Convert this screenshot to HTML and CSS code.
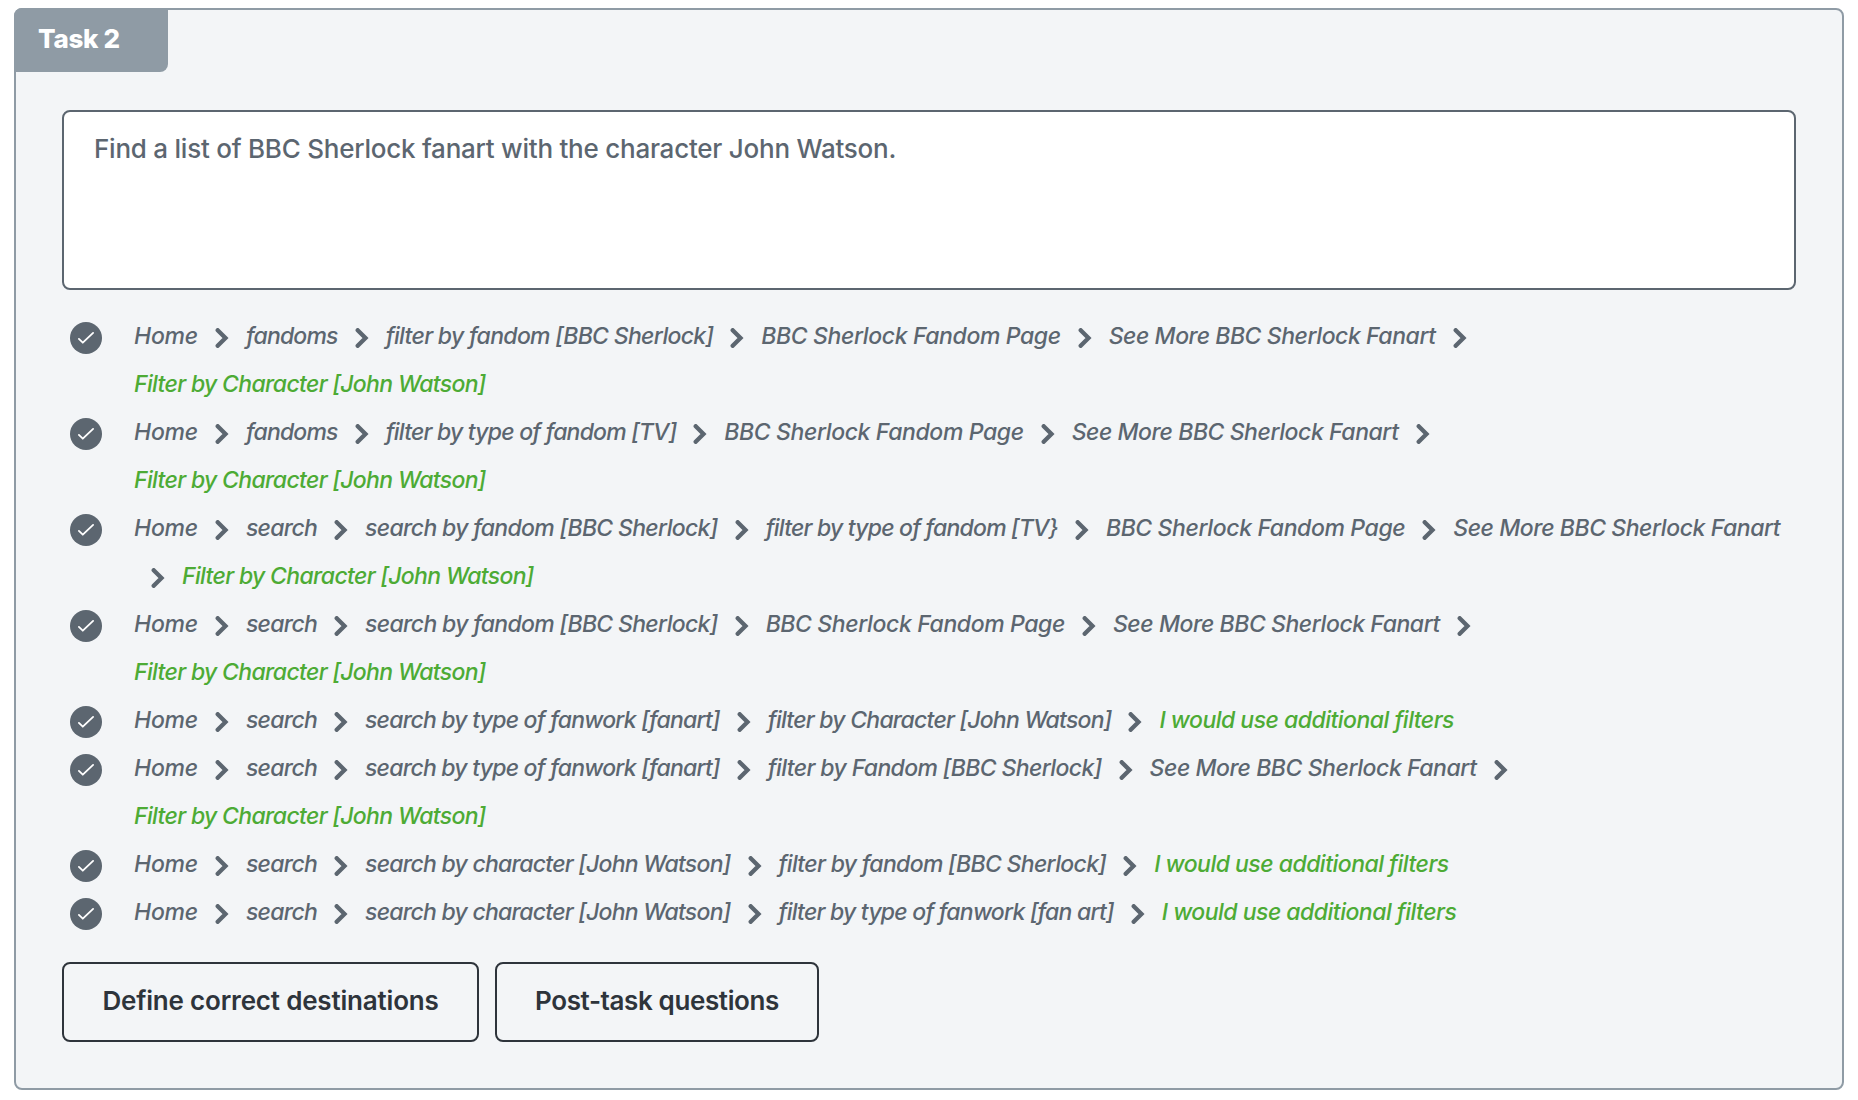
FILE: index.html
```
<!DOCTYPE html>
<html lang="en">
<head>
<meta charset="utf-8">
<title>Task 2</title>
<link rel="stylesheet" href="styles.css">
</head>
<body>
<svg class="defs" aria-hidden="true">
  <symbol id="check" viewBox="0 0 32 32"><circle cx="16" cy="16" r="16" fill="#5c6670"/><path d="M8.9 16.9l3.9 3.8L23.1 10.9" fill="none" stroke="#fff" stroke-width="1.8" stroke-linecap="round" stroke-linejoin="round"/></symbol>
  <symbol id="next" viewBox="0 0 14 20"><path d="M2.7 2.2L10.5 10L2.7 17.8" fill="none" stroke="#5c6670" stroke-width="4.3" stroke-linecap="round"/></symbol>
</svg>
<section class="task">
  <h2 class="task-label">Task 2</h2>
  <div class="description">Find a list of BBC Sherlock fanart with the character John Watson.</div>
  <ul class="paths">
    <li class="path"><svg class="check"><use href="#check"/></svg><div class="crumbs"><span class="home">Home</span><svg class="next"><use href="#next"/></svg><span class="fandoms">fandoms</span><svg class="next"><use href="#next"/></svg><span class="filter-fandom">filter by fandom [BBC Sherlock]</span><svg class="next"><use href="#next"/></svg><span class="fandom-page">BBC Sherlock Fandom Page</span><svg class="next"><use href="#next"/></svg><span class="more">See More BBC Sherlock Fanart</span><svg class="next"><use href="#next"/></svg><span class="goal goal-character">Filter by Character [John Watson]</span></div></li>
    <li class="path"><svg class="check"><use href="#check"/></svg><div class="crumbs"><span class="home">Home</span><svg class="next"><use href="#next"/></svg><span class="fandoms">fandoms</span><svg class="next"><use href="#next"/></svg><span class="filter-type">filter by type of fandom [TV]</span><svg class="next"><use href="#next"/></svg><span class="fandom-page">BBC Sherlock Fandom Page</span><svg class="next"><use href="#next"/></svg><span class="more">See More BBC Sherlock Fanart</span><svg class="next"><use href="#next"/></svg><span class="goal goal-character">Filter by Character [John Watson]</span></div></li>
    <li class="path"><svg class="check"><use href="#check"/></svg><div class="crumbs"><span class="home">Home</span><svg class="next"><use href="#next"/></svg><span class="search">search</span><svg class="next"><use href="#next"/></svg><span class="search-fandom">search by fandom [BBC Sherlock]</span><svg class="next"><use href="#next"/></svg><span class="filter-type">filter by type of fandom [TV}</span><svg class="next"><use href="#next"/></svg><span class="fandom-page">BBC Sherlock Fandom Page</span><svg class="next"><use href="#next"/></svg><span class="more">See More BBC Sherlock Fanart</span><svg class="next"><use href="#next"/></svg><span class="goal goal-character">Filter by Character [John Watson]</span></div></li>
    <li class="path"><svg class="check"><use href="#check"/></svg><div class="crumbs"><span class="home">Home</span><svg class="next"><use href="#next"/></svg><span class="search">search</span><svg class="next"><use href="#next"/></svg><span class="search-fandom">search by fandom [BBC Sherlock]</span><svg class="next"><use href="#next"/></svg><span class="fandom-page">BBC Sherlock Fandom Page</span><svg class="next"><use href="#next"/></svg><span class="more">See More BBC Sherlock Fanart</span><svg class="next"><use href="#next"/></svg><span class="goal goal-character">Filter by Character [John Watson]</span></div></li>
    <li class="path"><svg class="check"><use href="#check"/></svg><div class="crumbs"><span class="home">Home</span><svg class="next"><use href="#next"/></svg><span class="search">search</span><svg class="next"><use href="#next"/></svg><span class="search-fanwork">search by type of fanwork [fanart]</span><svg class="next"><use href="#next"/></svg><span class="filter-character">filter by Character [John Watson]</span><svg class="next"><use href="#next"/></svg><span class="goal goal-more">I would use additional filters</span></div></li>
    <li class="path"><svg class="check"><use href="#check"/></svg><div class="crumbs"><span class="home">Home</span><svg class="next"><use href="#next"/></svg><span class="search">search</span><svg class="next"><use href="#next"/></svg><span class="search-fanwork">search by type of fanwork [fanart]</span><svg class="next"><use href="#next"/></svg><span class="filter-fandom-cap">filter by Fandom [BBC Sherlock]</span><svg class="next"><use href="#next"/></svg><span class="more">See More BBC Sherlock Fanart</span><svg class="next"><use href="#next"/></svg><span class="goal goal-character">Filter by Character [John Watson]</span></div></li>
    <li class="path"><svg class="check"><use href="#check"/></svg><div class="crumbs"><span class="home">Home</span><svg class="next"><use href="#next"/></svg><span class="search">search</span><svg class="next"><use href="#next"/></svg><span class="search-character">search by character [John Watson]</span><svg class="next"><use href="#next"/></svg><span class="filter-fandom">filter by fandom [BBC Sherlock]</span><svg class="next"><use href="#next"/></svg><span class="goal goal-more">I would use additional filters</span></div></li>
    <li class="path"><svg class="check"><use href="#check"/></svg><div class="crumbs"><span class="home">Home</span><svg class="next"><use href="#next"/></svg><span class="search">search</span><svg class="next"><use href="#next"/></svg><span class="search-character">search by character [John Watson]</span><svg class="next"><use href="#next"/></svg><span class="filter-fanwork">filter by type of fanwork [fan art]</span><svg class="next"><use href="#next"/></svg><span class="goal goal-more">I would use additional filters</span></div></li>
  </ul>
  <div class="actions">
    <button class="button destinations">Define correct destinations</button>
    <button class="button questions">Post-task questions</button>
  </div>
</section>
</body>
</html>
```
FILE: styles.css
```
* { box-sizing: border-box; }
body { margin: 0; padding: 8px 14px 10px; background: #fff; color: #5c6670; font-family: Inter, "Liberation Sans", sans-serif; }
.defs { display: none; }
.task { height: 1082px; padding: 0 46px; background: #f3f5f7; border: 2px solid #8f9ba5; border-radius: 8px; }
.task-label { width: 154px; height: 64px; margin: -2px 0 0 -48px; padding-left: 24px; background: #8f9ba5; border-radius: 8px 0 8px 0; color: #fff; font-size: 26px; font-weight: 800; line-height: 61px; letter-spacing: -0.3px; white-space: nowrap; }
.description { height: 180px; margin-top: 38px; padding: 17px 30px; background: #fff; border: 2px solid #5c6670; border-radius: 8px; font-size: 26px; font-weight: 450; line-height: 40px; letter-spacing: -0.24px; }
.paths { margin: 22px 0 0; padding: 0 0 0 8px; list-style: none; }
.path { display: flex; gap: 32px; }
.check { flex: none; width: 32px; height: 32px; margin-top: 10px; }
.crumbs { display: flex; flex-wrap: wrap; width: 1660px; font-size: 23px; font-style: italic; font-weight: 500; line-height: 48px; white-space: nowrap; font-feature-settings: "cv11"; }
.next { flex: none; width: 14px; height: 20px; margin: 16px 17px 12px; }
.goal { color: #4dab35; }

/* Tracking per step label */
.home { letter-spacing: -0.203px; }
.fandoms { letter-spacing: -0.797px; }
.search { letter-spacing: -0.76px; }
.filter-fandom { letter-spacing: -0.673px; }
.filter-fandom-cap { letter-spacing: -0.618px; }
.fandom-page { letter-spacing: -0.381px; }
.more { letter-spacing: -0.436px; }
.filter-type { letter-spacing: -0.79px; }
.search-fandom { letter-spacing: -0.667px; }
.search-fanwork { letter-spacing: -0.768px; }
.search-character { letter-spacing: -0.744px; }
.filter-character { letter-spacing: -0.762px; }
.filter-fanwork { letter-spacing: -0.769px; }
.goal-character { letter-spacing: -0.66px; }
.goal-more { letter-spacing: -0.514px; }

.actions { display: flex; gap: 16px; margin-top: 26px; }
.button { height: 80px; padding: 0 0 4px; background: transparent; border: 2px solid #2e343b; border-radius: 8px; color: #2e343b; font: 600 26px Inter, "Liberation Sans", sans-serif; white-space: nowrap; }
.destinations { width: 417px; letter-spacing: -0.19px; }
.questions { width: 324px; letter-spacing: -0.38px; }
```
